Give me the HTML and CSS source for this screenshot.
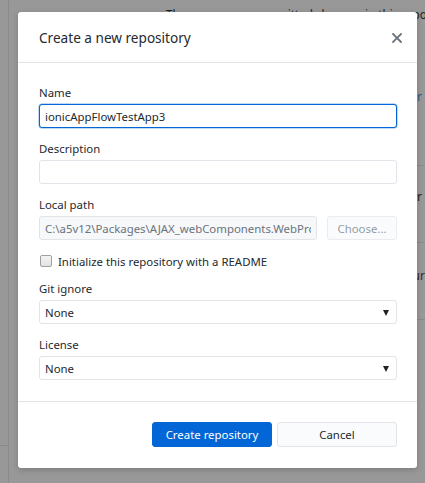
FILE: index.html
```html
<!DOCTYPE html>
<html lang="en">
<head>
<meta charset="utf-8">
<title>Create a new repository</title>
<link rel="stylesheet" href="styles.css">
</head>
<body>
<div class="app">
  <aside class="sidebar"><div class="sidebar-foot"></div></aside>
  <main class="main">
    <p class="blank-title">There are no uncommitted changes in this repository</p>
    <div class="suggestions">
      <div class="card"><span class="card-text link">Open the repository in your external editor</span></div>
      <div class="card"><span class="card-text">View the files of your repository in Explorer</span></div>
      <div class="card"><span class="card-text warm">Publish this repository to your</span></div>
    </div>
  </main>
</div>

<div class="dialog" role="dialog" aria-labelledby="dlg-title">
  <header class="dialog-header">
    <h1 id="dlg-title" class="dialog-title">Create a new repository</h1>
    <button class="close" aria-label="Close">
      <svg width="10" height="10" viewBox="0 0 10 10"><path d="M1 1 L9 9 M9 1 L1 9" stroke="#6a737d" stroke-width="1.8" stroke-linecap="square"/></svg>
    </button>
  </header>
  <div class="dialog-body">
    <div class="field">
      <label class="label">Name</label>
      <input class="input focused" type="text" value="ionicAppFlowTestApp3">
    </div>
    <div class="field">
      <label class="label">Description</label>
      <input class="input" type="text" value="">
    </div>
    <div class="field">
      <label class="label">Local path</label>
      <div class="path-row">
        <input class="input disabled" type="text" value="C:\a5v12\Packages\AJAX_webComponents.WebProjects" readonly>
        <button class="btn choose">Choose...</button>
      </div>
    </div>
    <label class="check-row">
      <span class="checkbox"></span>
      <span>Initialize this repository with a README</span>
    </label>
    <div class="field">
      <label class="label">Git ignore</label>
      <div class="select"><span>None</span><span class="arrow"></span></div>
    </div>
    <div class="field last">
      <label class="label">License</label>
      <div class="select"><span>None</span><span class="arrow"></span></div>
    </div>
  </div>
  <footer class="dialog-footer">
    <button class="btn primary">Create repository</button>
    <button class="btn secondary">Cancel</button>
  </footer>
</div>
</body>
</html>
```

FILE: styles.css
```css
* { box-sizing: border-box; }
html, body { margin: 0; padding: 0; }
body {
  width: 425px;
  height: 483px;
  overflow: hidden;
  position: relative;
  background: #989898;
  font-family: "Noto Sans", "Open Sans", sans-serif;
  font-size: 11.4px;
  color: #24292e;
}
.app {
  display: flex;
  height: 483px;
}
.sidebar {
  width: 9px;
  flex: none;
  border-right: 1px solid #8a8a8a;
  display: flex;
  flex-direction: column;
  justify-content: flex-end;
}
.sidebar-foot {
  height: 38px;
  border-top: 1px solid #8a8a8a;
}
.main {
  flex: 1;
  min-width: 0;
  overflow: hidden;
}
.blank-title {
  margin: 4px 0 0 157px;
  font-size: 11.7px;
  line-height: 20px;
  white-space: nowrap;
  color: #1e1e1e;
}
.suggestions {
  margin: 65px 0 0 120px;
}
.card {
  height: 77px;
  border-bottom: 1px solid #8a8a8a;
  display: flex;
  justify-content: flex-end;
  align-items: flex-start;
  white-space: nowrap;
  overflow: hidden;
}
.card-text {
  font-size: 12px;
  line-height: 16px;
  padding-right: 3px;
  color: #202020;
}
.card:first-child .card-text { margin-top: 0; }
.card:nth-child(2) .card-text { margin-top: 23px; }
.card:nth-child(3) .card-text { margin-top: 25px; padding-right: 0; }
.card-text.link { color: #2c5a8c; }
.card-text.warm { color: #3a2a2a; }

.dialog {
  position: absolute;
  top: 12px;
  left: 18px;
  width: 399px;
  height: 456px;
  background: #fff;
  border-radius: 3px;
  box-shadow: 0 2px 6px rgba(0,0,0,0.18);
  display: flex;
  flex-direction: column;
}
.dialog-header {
  height: 51px;
  flex: none;
  border-bottom: 1px solid #e1e4e8;
  display: flex;
  align-items: center;
  justify-content: space-between;
  padding: 0 15px 0 21px;
}
.dialog-title {
  margin: 0;
  font-size: 13.6px;
  font-weight: 400;
  color: #24292e;
}
.close {
  border: 0;
  background: none;
  padding: 0;
  width: 10px;
  height: 10px;
  display: flex;
  margin-top: 1px;
}
.dialog-body {
  padding: 22px 20px 21px 21px;
  border-bottom: 1px solid #e1e4e8;
}
.field {
  display: flex;
  flex-direction: column;
  margin-bottom: 13px;
}
.field.last { margin-bottom: 0; }
.label {
  line-height: 16px;
  height: 16px;
  margin-bottom: 3px;
  color: #24292e;
}
.input {
  height: 24px;
  width: 100%;
  border: 1px solid #e1e4e8;
  border-radius: 3px;
  padding: 0 5px;
  font-family: inherit;
  font-size: 11.4px;
  color: #24292e;
  background: #fff;
  outline: none;
}
.input.focused {
  border-color: #0366d6;
  box-shadow: 0 0 0 0.5px rgba(3,102,214,0.5);
}
.input.disabled {
  background: #f6f8fa;
  color: #6a737d;
}
.path-row {
  display: flex;
  gap: 10px;
}
.path-row .input { flex: 1; min-width: 0; }
.btn {
  font-family: inherit;
  font-size: 11.4px;
  border-radius: 3px;
  height: 25px;
  padding: 0;
  cursor: default;
}
.choose {
  width: 70px;
  height: 24px;
  flex: none;
  background: #fafbfc;
  border: 1px solid #eaecef;
  color: #959da5;
}
.check-row {
  display: flex;
  align-items: center;
  gap: 6px;
  height: 16px;
  margin: 0 0 12px 1px;
  color: #24292e;
}
.checkbox {
  width: 12px;
  height: 12px;
  border: 1px solid #a0a0a0;
  border-radius: 2px;
  background: linear-gradient(#f4f4f4, #e2e2e2);
}
.select {
  height: 24px;
  border: 1px solid #e1e4e8;
  border-radius: 3px;
  padding: 0 7px 0 5px;
  display: flex;
  align-items: center;
  justify-content: space-between;
  color: #24292e;
}
.arrow {
  width: 0;
  height: 0;
  border-left: 3.5px solid transparent;
  border-right: 3.5px solid transparent;
  border-top: 6px solid #222;
  margin-top: 1px;
}
.dialog-footer {
  flex: 1;
  display: flex;
  justify-content: flex-end;
  align-items: flex-start;
  gap: 5px;
  padding: 20px 20px 0 0;
}
.primary {
  width: 120px;
  background: #0366d6;
  border: 1px solid #0366d6;
  color: #fff;
}
.secondary {
  width: 120px;
  background: #fafbfc;
  border: 1px solid #e1e4e8;
  color: #24292e;
}
```
